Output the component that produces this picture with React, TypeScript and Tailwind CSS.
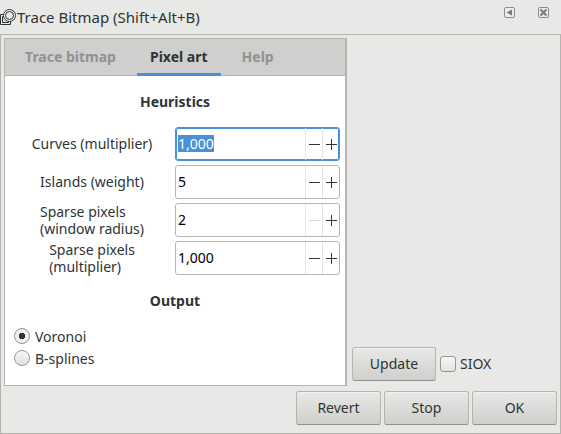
import { useEffect, useRef, useState } from "react";
import type { ReactNode } from "react";

function StepButton({ label, plus, disabled, onClick }: { label: string; plus?: boolean; disabled?: boolean; onClick: () => void }) {
  return (
    <button
      type="button"
      aria-label={label}
      disabled={disabled}
      onClick={onClick}
      className="flex w-[17px] shrink-0 items-center justify-center border-l border-[#e4e4e2] pt-px pl-px text-[#2e3436] disabled:text-[#d5d5d3]"
    >
      <svg width="11" height="11" viewBox="0 0 11 11" stroke="currentColor" strokeWidth="1" fill="none" aria-hidden="true">
        <path d="M0 5.5H11" />
        {plus && <path d="M5.5 0V11" />}
      </svg>
    </button>
  );
}

function SpinRow({ id, label, initial, min, selected }: { id: string; label: ReactNode; initial: number; min: number; selected?: boolean }) {
  const [value, setValue] = useState(initial);
  const ref = useRef<HTMLInputElement>(null);
  const decimals = Number.isInteger(min) ? 0 : 3;
  useEffect(() => {
    if (selected) {
      ref.current?.focus();
      ref.current?.select();
    }
  }, [selected]);
  return (
    <div className="flex h-[34px] items-center">
      <div className="flex flex-1 justify-center pb-px">
        <label htmlFor={id} className="leading-[17px]">{label}</label>
      </div>
      <div className="flex h-full w-[165px] rounded-[3px] border border-[#b6b6b3] bg-white focus-within:border-[#4a90d9] focus-within:shadow-[inset_0_0_0_1px_#4a90d9]">
        <input
          id={id}
          ref={ref}
          type="text"
          value={value.toFixed(decimals).replace(".", ",")}
          onChange={(e) => {
            const next = parseFloat(e.target.value.replace(",", "."));
            if (!Number.isNaN(next)) setValue(next);
          }}
          className="min-w-0 flex-1 bg-transparent pb-0.5 pl-0.5 text-black outline-none selection:bg-[#4a90d9] selection:text-white"
        />
        <StepButton label="Decrease" disabled={value <= min} onClick={() => setValue(value - 1)} />
        <StepButton label="Increase" plus onClick={() => setValue(value + 1)} />
      </div>
    </div>
  );
}

function PushButton({ children, className = "w-[85px]" }: { children: ReactNode; className?: string }) {
  return (
    <button
      type="button"
      className={
        className +
        " h-[34px] rounded-[3px] border border-[#b4b4b1] border-b-[#8f8f8c] bg-linear-to-b from-[#e8e8e7] to-[#cfcfcd] pb-0.5 text-center shadow-[inset_0_1px_0_#f1f1f0]"
      }
    >
      {children}
    </button>
  );
}

function Radio({ label, checked }: { label: string; checked?: boolean }) {
  return (
    <label className="flex h-[22px] items-center gap-[5px]">
      <input
        type="radio"
        name="output"
        defaultChecked={checked}
        className="size-4 appearance-none rounded-full border border-[#969693] bg-linear-to-b from-[#f7f7f6] to-[#e2e2e0] checked:bg-[radial-gradient(circle,#2e3436_3px,#eeeeed_3.5px)]"
      />
      {label}
    </label>
  );
}

export default function App() {
  const tabs = ["Trace bitmap", "Pixel art", "Help"];
  const [active, setActive] = useState("Pixel art");
  return (
    <div className="flex min-h-screen flex-col bg-[#e8e8e6] font-['Noto_Sans',sans-serif] text-[14px] leading-[17px] text-[#2e3436]">
      <header className="flex h-[34px] items-center pr-3">
        <svg width="17" height="17" viewBox="0 0 17 17" fill="none" stroke="#2e3436" aria-hidden="true">
          <path d="M4 5.5H0.5V15.5H10.5V12" />
          <path d="M4 7.5H2.5V13.5H8.5V12" />
          <circle cx="9.500" cy="6.500" r="6" fill="#f2f2f0" />
          <circle cx="9.500" cy="6.500" r="4" fill="#e8e8e6" />
        </svg>
        <h1 className="flex-1 text-[15px] leading-[17px]">Trace Bitmap (Shift+Alt+B)</h1>
        <div className="flex gap-[23px] pb-[9px]">
          <button type="button" aria-label="Iconify dock">
            <svg className="block" width="11" height="11" viewBox="0 0 11 11" aria-hidden="true">
              <rect x="0.5" y="0.5" width="10" height="10" rx="1.500" fill="#ececea" stroke="#8b8e8c" />
              <path d="M8 2.500V8.500L2.500 5.500Z" fill="#777b79" />
            </svg>
          </button>
          <button type="button" aria-label="Close dock">
            <svg className="block" width="11" height="11" viewBox="0 0 11 11" aria-hidden="true">
              <rect x="0.5" y="0.5" width="10" height="10" rx="1.500" fill="#ececea" stroke="#8b8e8c" />
              <path d="M2.500 2.500L8.500 8.500M8.500 2.500L2.500 8.500" stroke="#777b79" strokeWidth="2" />
            </svg>
          </button>
        </div>
      </header>

      <main className="flex flex-1 flex-col gap-[5px] border border-[#b4b4b1] px-[3px] pt-[3px] pb-2">
        <div className="flex flex-1 gap-[5px]">
          <section className="flex flex-1 flex-col border border-r-2 border-[#b4b4b1] bg-white">
            <div role="tablist" className="flex h-[37px] gap-2 border-b border-[#b4b4b1] bg-[#cfcfcd] pl-[7px]">
              {tabs.map((tab) => (
                <button
                  key={tab}
                  type="button"
                  role="tab"
                  aria-selected={tab === active}
                  onClick={() => setActive(tab)}
                  className="-mb-px border-b-3 border-transparent px-[13px] font-bold whitespace-nowrap text-[#8f9291] aria-selected:border-[#4a90d9] aria-selected:text-[#2e3436]"
                >
                  {tab}
                </button>
              ))}
            </div>

            <h2 className="pt-[17px] pb-[17px] text-center font-bold">Heuristics</h2>
            <div className="flex flex-col gap-1 pr-[5px] pl-1">
              <SpinRow id="curves" label="Curves (multiplier)" initial={1} min={0.001} selected />
              <SpinRow id="islands" label="Islands (weight)" initial={5} min={1} />
              <SpinRow id="radius" label={<>Sparse pixels<br />(window radius)</>} initial={2} min={2} />
              <SpinRow id="sparse" label={<>Sparse pixels<br />(multiplier)</>} initial={1} min={0.001} />
            </div>

            <h2 className="pt-[17px] pb-4 text-center font-bold">Output</h2>
            <div className="pl-[9px]">
              <Radio label="Voronoi" checked />
              <Radio label="B-splines" />
            </div>
          </section>

          <aside className="flex w-[205px] items-end gap-1 pb-[5px]">
            <PushButton className="w-[84px]">Update</PushButton>
            <label className="flex h-[34px] items-center gap-1">
              <input
                type="checkbox"
                className="size-4 appearance-none rounded-[3px] border border-[#969693] bg-linear-to-b from-[#f7f7f6] to-[#e2e2e0] checked:bg-[#4a90d9]"
              />
              <span className="pb-0.5">SIOX</span>
            </label>
          </aside>
        </div>

        <footer className="flex justify-end gap-[3px]">
          <PushButton>Revert</PushButton>
          <PushButton>Stop</PushButton>
          <PushButton>OK</PushButton>
        </footer>
      </main>
    </div>
  );
}
